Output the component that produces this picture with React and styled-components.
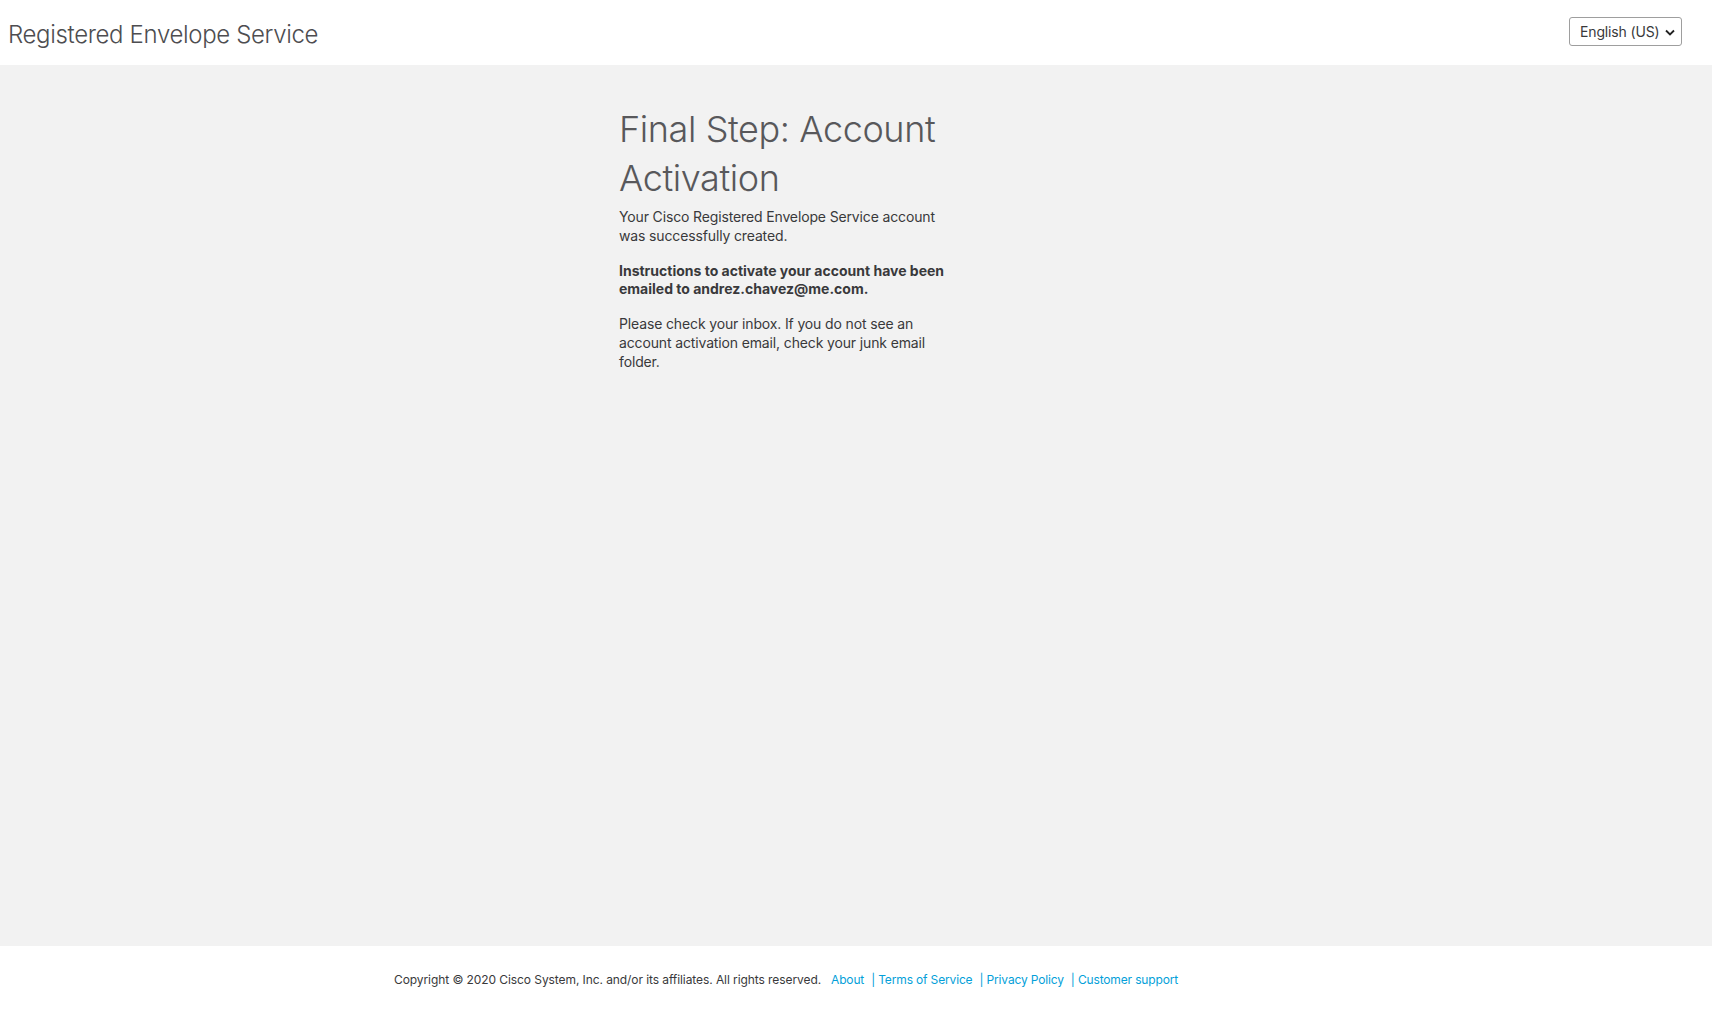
import React from 'react';
import styled, { createGlobalStyle } from 'styled-components';

const GlobalStyle = createGlobalStyle`
  html, body {
    margin: 0;
    padding: 0;
    background: #f2f2f2;
    font-family: Inter, Roboto, 'Liberation Sans', Arial, sans-serif;
    color: #39393b;
  }
`;

const Page = styled.div`
  display: flex;
  flex-direction: column;
  min-height: 100vh;
`;

const Header = styled.header`
  align-items: center;
  background: #fff;
  display: flex;
  height: 65px;
  justify-content: space-between;
  padding: 0 30px 0 8px;
  box-sizing: border-box;
`;

const Brand = styled.h1`
  color: #4d4d50;
  font-size: 24px;
  font-weight: 300;
  letter-spacing: -0.35px;
  margin: 4px 0 0;
`;

const SelectWrap = styled.div`
  position: relative;
  margin-top: -3px;
`;

const Select = styled.select`
  appearance: none;
  background: #fff;
  border: 1px solid #9e9e9e;
  border-radius: 3px;
  color: #39393b;
  font-family: inherit;
  font-size: 14px;
  letter-spacing: -0.15px;
  height: 29px;
  padding: 0 20px 0 10px;
  width: 113px;
  outline: none;
`;

const Chevron = styled.svg`
  pointer-events: none;
  position: absolute;
  right: 7px;
  top: 12px;
`;

const Main = styled.main`
  flex: 1;
  padding: 40px 0 0 619px;
`;

const Content = styled.section`
  width: 336px;
`;

const Title = styled.h2`
  color: #58585b;
  font-size: 36px;
  font-weight: 300;
  letter-spacing: -0.4px;
  line-height: 49px;
  margin: 0 0 5px;
`;

const Text = styled.p`
  font-size: 14px;
  letter-spacing: ${p => (p.bold ? '0' : '-0.14px')};
  line-height: 18.8px;
  margin: 0 0 16px;
  font-weight: ${p => (p.bold ? 700 : 400)};
`;

const Footer = styled.footer`
  align-items: center;
  background: #fff;
  display: flex;
  font-size: 12px;
  letter-spacing: -0.08px;
  height: 70px;
  padding: 0 0 4px 394px;
  box-sizing: border-box;
`;

const Copy = styled.span`
  color: #39393b;
  margin-right: 10px;
`;

const Link = styled.a`
  color: #049fd9;
  letter-spacing: -0.15px;
  text-decoration: none;
  margin-right: 7px;
`;

const App = () => (
  <Page>
    <GlobalStyle />
    <Header>
      <Brand>Registered Envelope Service</Brand>
      <SelectWrap>
        <Select defaultValue="en">
          <option value="en">English (US)</option>
        </Select>
        <Chevron width="10" height="7" viewBox="0 0 10 7">
          <path d="M1 1.5l4 4 4-4" fill="none" stroke="#222" strokeWidth="1.8" />
        </Chevron>
      </SelectWrap>
    </Header>
    <Main>
      <Content>
        <Title>Final Step: Account Activation</Title>
        <Text>Your Cisco Registered Envelope Service account was successfully created.</Text>
        <Text bold>Instructions to activate your account have been emailed to andrez.chavez@me.com.</Text>
        <Text>Please check your inbox. If you do not see an account activation email, check your junk email folder.</Text>
      </Content>
    </Main>
    <Footer>
      <Copy>Copyright © 2020 Cisco System, Inc. and/or its affiliates. All rights reserved.</Copy>
      <Link href="#">About</Link>
      <Link href="#">| Terms of Service</Link>
      <Link href="#">| Privacy Policy</Link>
      <Link href="#">| Customer support</Link>
    </Footer>
  </Page>
);

export default App;
